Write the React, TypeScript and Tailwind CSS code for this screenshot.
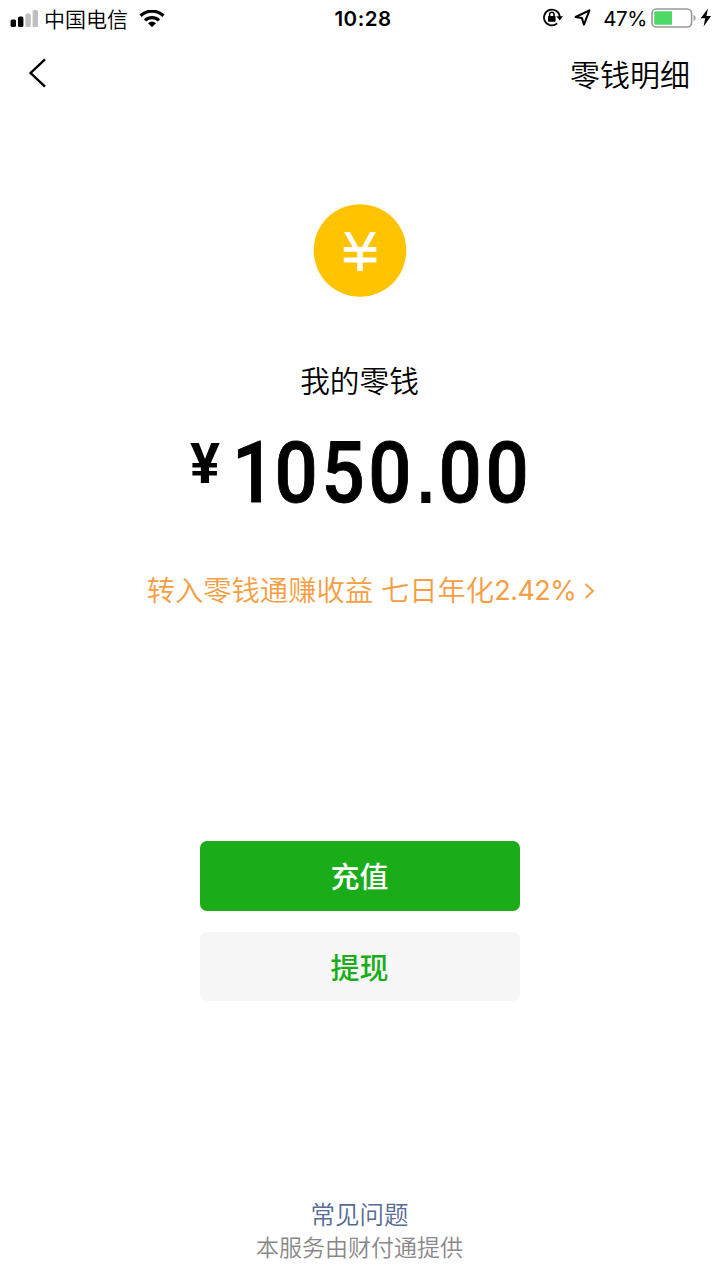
import type { ReactNode } from 'react';

function Signal() {
  return (
    <svg width="28" height="18" viewBox="0 0 28 18">
      <rect x="0.6" y="9.5" width="5.4" height="7.5" rx="1.6" fill="#000" />
      <rect x="8" y="6.5" width="5.4" height="10.5" rx="1.6" fill="#000" />
      <rect x="15.4" y="3.5" width="5.4" height="13.5" rx="1.6" fill="#bfbfbf" />
      <rect x="22.6" y="0" width="5.4" height="17" rx="1.6" fill="#bfbfbf" />
    </svg>
  );
}

function Wifi() {
  return (
    <svg width="26" height="18" viewBox="0 0 26 18" fill="none" stroke="#000" strokeWidth="3.3">
      <path d="M1.6 5.8A16.4 16.4 0 0 1 24.4 5.8" />
      <path d="M6 10.4A10.2 10.2 0 0 1 20 10.4" />
      <path d="M9 13.3Q13 9.9 17 13.3L13 17.2Z" fill="#000" stroke="none" />
    </svg>
  );
}

function RotationLock() {
  return (
    <svg width="20" height="19" viewBox="0 0 20 19" fill="none">
      <path d="M14.2 15.4A7.9 7.9 0 1 1 16.8 9" stroke="#000" strokeWidth="1.8" />
      <path d="M13.4 8.2H20L16.7 12.4Z" fill="#000" />
      <rect x="5" y="8" width="7.6" height="5.8" rx="0.8" fill="#000" />
      <path d="M6.6 8.4V6.5a2.2 2.2 0 0 1 4.4 0V8.4" stroke="#000" strokeWidth="1.5" />
    </svg>
  );
}

function LocationArrow() {
  return (
    <svg width="17" height="17" viewBox="0 0 17 17" fill="none">
      <path d="M15.4 1.3L1.6 8L7.8 8.9L10 15.6Z" stroke="#000" strokeWidth="2" strokeLinejoin="round" />
    </svg>
  );
}

function Battery() {
  return (
    <svg width="46" height="20" viewBox="0 0 46 20" fill="none">
      <rect x="1" y="1" width="39.6" height="18" rx="4.5" stroke="#98989b" strokeWidth="1.6" />
      <path d="M4.8 3.2H21V16.8H4.8Q3.2 16.8 3.2 15.2V4.8Q3.2 3.2 4.8 3.2Z" fill="#4cd964" />
      <path d="M42.6 6.8Q44.6 7.8 44.6 10T42.6 13.2Z" fill="#98989b" />
    </svg>
  );
}

function Bolt() {
  return (
    <svg width="12" height="19" viewBox="0 0 12 19">
      <path d="M7.9 0.4L0.7 10.3H5.2L3.6 18.4L11.1 8.1H6.5Z" fill="#000" />
    </svg>
  );
}

function Coin() {
  return (
    <svg width="94" height="94" viewBox="0 0 94 94" className="block">
      <circle cx="47" cy="47.5" r="46.3" fill="#ffc300" />
      <path
        d="M31 29H37L45.2 44H49L57 29H63L54.4 44H63.4V48.8H49.8V54.5H63.4V59.6H49.8V68H44.2V59.6H30.7V54.5H44.2V48.8H30.7V44H39.6Z"
        fill="#fff"
      />
    </svg>
  );
}

function ActionButton({ className, children }: { className: string; children: ReactNode }) {
  return (
    <button type="button" className={`flex h-[69.5px] w-[320px] items-center justify-center rounded-[7px] pt-[4px] pr-px text-[29px] font-medium ${className}`}>
      {children}
    </button>
  );
}

export default function App() {
  return (
    <div className="flex h-[1280px] w-[720px] flex-col items-center overflow-hidden bg-white font-['Inter','Noto_Sans_CJK_SC',sans-serif] text-black">
      <header className="grid h-9 w-full grid-cols-[1fr_auto_1fr] items-center pr-2 pl-[10px]">
        <div className="flex h-9 items-center">
          <Signal />
          <span className="ml-[6px] pt-[2px] text-[21px] leading-[36px] font-[350]">中国电信</span>
          <span className="ml-[11px]"><Wifi /></span>
        </div>
        <span className="translate-x-[2px] pt-px text-[20.5px] leading-9 font-semibold tracking-[0.5px]">10:28</span>
        <div className="flex h-[35px] items-center justify-end self-start">
          <RotationLock />
          <span className="ml-[11px]"><LocationArrow /></span>
          <span className="ml-[12px] pt-[2px] text-[20.5px] leading-9 tracking-[-0.4px]">47%</span>
          <span className="ml-[4px]"><Battery /></span>
          <span className="ml-[3px]"><Bolt /></span>
        </div>
      </header>

      <nav className="flex h-[76px] w-full items-center justify-between pr-[30px] pl-[28px]">
        <button type="button" aria-label="返回" className="pb-[2px]">
          <svg width="20" height="32" viewBox="0 0 20 32" fill="none">
            <path d="M17 2.3L2.6 16L17 29.7" stroke="#000" strokeWidth="2.4" />
          </svg>
        </button>
        <a className="pt-[2px] text-[30px] leading-[76px] font-[350]">零钱明细</a>
      </nav>

      <main className="flex w-full flex-col items-center pt-[91px]">
        <Coin />
        <h1 className="mt-[64px] pr-px text-[29.7px] leading-[40px] font-[350]">我的零钱</h1>
        <div className="mt-[22px] flex h-[100px] w-[340px] items-start font-['Roboto',sans-serif]">
          <span className="mt-[11px] w-[42px] shrink-0 text-[56px] leading-[60px] font-bold">¥</span>
          <span className="origin-left scale-x-[0.9] text-[84.5px] leading-[100px] font-medium tracking-[4.1px] whitespace-nowrap [-webkit-text-stroke:0.9px_black]">
            <span className="tracking-[-0.8px]">1</span>050<span className="font-['Liberation_Sans',sans-serif] tracking-[2.4px] [-webkit-text-stroke:2px_black]">.</span>00
          </span>
        </div>
        <a className="mt-[46px] ml-[22px] flex h-[44px] items-center text-[28.3px] leading-[44px] font-[350] text-[#f79d42]">
          转入零钱通赚收益 七日年化<span className="text-[27px] font-normal tracking-[-0.5px]">2.42%</span>
          <svg width="11" height="18" viewBox="0 0 11 18" fill="none" className="mb-px ml-[8px]">
            <path d="M1.5 2L9 9L1.5 16" stroke="#f79d42" strokeWidth="1.9" />
          </svg>
        </a>
        <div className="mt-[228px] flex flex-col gap-[21px]">
          <ActionButton className="bg-[#1aad19] text-white">充值</ActionButton>
          <ActionButton className="bg-[#f7f7f7] text-[#1aad19]">提现</ActionButton>
        </div>
      </main>

      <footer className="mt-auto flex flex-col items-center pr-[1px] pb-[15px]">
        <a className="text-[24.5px] leading-[34px] font-[350] text-[#576b95]">常见问题</a>
        <p className="text-[23px] leading-[33px] font-[350] text-[#888888]">本服务由财付通提供</p>
      </footer>
    </div>
  );
}
